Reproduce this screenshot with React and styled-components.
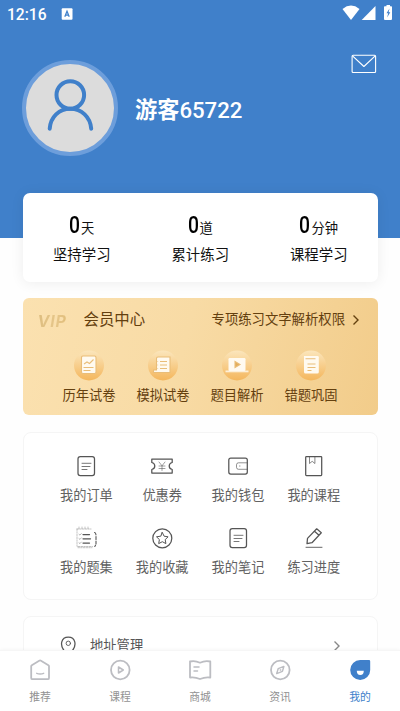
import React from "react";
import styled, { createGlobalStyle } from "styled-components";

const GlobalStyle = createGlobalStyle`
  * { box-sizing: border-box; }
  body {
    margin: 0;
    background: #fefefe;
    font-family: Roboto, "Noto Sans CJK SC", sans-serif;
  }
  svg { display: block; flex: none; }
`;

const Screen = styled.div`
  width: 400px;
  height: 711px;
  display: flex;
  flex-direction: column;
  overflow: hidden;
`;

const Content = styled.main`
  flex: 1;
  min-height: 0;
  overflow: hidden;
`;

const Hero = styled.header`
  height: 237.5px;
  background: #4080ca;
  color: #fff;
`;

const StatusBar = styled.div`
  height: 28px;
  padding: 0 7px 0 7px;
  display: flex;
  align-items: center;
`;

const Clock = styled.span`
  width: 54px;
  padding-top: 1px;
  font-size: 15.6px;
  line-height: 28px;
  font-weight: 500;
`;

const StatusIcons = styled.div`
  margin-left: auto;
  display: flex;
`;

const MailRow = styled.div`
  height: 32px;
  display: flex;
  justify-content: flex-end;
  padding: 25px 22px 0 0;
`;

const Profile = styled.div`
  display: flex;
  align-items: center;
  gap: 17px;
  padding-left: 22px;
`;

const Avatar = styled.div`
  width: 96px;
  height: 96px;
  border-radius: 50%;
  border: 4px solid #6d9edb;
  background: #dcdcdc;
`;

const UserName = styled.h1`
  margin: 4px 0 0;
  font-size: 22.2px;
  line-height: 32px;
  font-weight: 700;
`;

const Digits = styled.span`
  font-weight: 500;
`;

const Stats = styled.section`
  height: 89px;
  margin: -44.5px 22px 0 22.5px;
  padding-top: 19px;
  border-radius: 7px;
  background: #fff;
  box-shadow: 0 1px 14px rgba(0, 0, 0, 0.07);
  display: grid;
  grid-template-columns: repeat(3, 1fr);
`;

const Stat = styled.div`
  display: flex;
  flex-direction: column;
  align-items: center;
  color: #111;
`;

const StatValue = styled.div`
  height: 31px;
  display: flex;
  align-items: baseline;
  font-size: 13.3px;
  line-height: 28px;
`;

const Count = styled.span`
  width: 12px;
  font-size: 23px;
  font-weight: 500;
  color: #000;
  transform: scaleX(0.84);
  transform-origin: left;
`;

const StatLabel = styled.div`
  font-size: 14.4px;
  line-height: 26px;
`;

const VipCard = styled.section`
  height: 117px;
  margin: 16px 22px 0 22.5px;
  border-radius: 6px;
  background: linear-gradient(105deg, #fbe1b0 0%, #f8dba5 45%, #f2cc8a 100%);
  color: #64400f;
`;

const VipHeader = styled.div`
  height: 43px;
  padding: 0 17px 0 15px;
  display: flex;
  align-items: center;
`;

const VipMark = styled.span`
  width: 46px;
  padding-top: 2px;
  font-family: Inter, sans-serif;
  font-size: 16px;
  font-style: italic;
  font-weight: 700;
  letter-spacing: 0.8px;
  line-height: 20px;
  background: linear-gradient(100deg, #dcbc7e, #e6c68a 40%, #dfba74 70%);
  background-clip: text;
  color: transparent;
`;

const VipTitle = styled.span`
  font-size: 15.4px;
  line-height: 24px;
`;

const VipNote = styled.span`
  margin: 0 6px 0 auto;
  font-size: 13.35px;
  line-height: 24px;
`;

const VipGrid = styled.div`
  display: grid;
  grid-template-columns: repeat(4, 74px);
  padding: 8px 0 0 29.5px;
`;

const VipItem = styled.div`
  display: flex;
  flex-direction: column;
  align-items: center;
  gap: 3px;
  font-size: 13.3px;
  line-height: 24px;
`;

const MenuCard = styled.section`
  height: 168px;
  margin: 17px 22px 0 22.5px;
  padding: 21px 0 0 25px;
  border: 1.5px solid #f5f5f5;
  border-radius: 8px;
  background: #fff;
  display: grid;
  grid-template-columns: repeat(4, 75.8px);
  grid-auto-rows: 72px;
`;

const MenuItem = styled.div`
  display: flex;
  flex-direction: column;
  align-items: center;
  gap: 6px;
  color: #626262;
  font-size: 13.2px;
  line-height: 24px;
`;

const AddressCard = styled.section`
  height: 60px;
  margin: 16px 22px 0 22.5px;
  padding: 0 35px 0 32px;
  border: 1.5px solid #f5f5f5;
  border-radius: 8px;
  background: #fff;
  display: flex;
  align-items: center;
  color: #555;
`;

const AddressLabel = styled.span`
  margin: 0 auto 0 10.5px;
  font-size: 13.3px;
  line-height: 24px;
`;

const TabBar = styled.nav`
  height: 61.5px;
  flex: none;
  background: #fff;
  border-top: 1px solid #f6f6f6;
  display: grid;
  grid-template-columns: repeat(5, 80px);
  box-shadow: 0 -1px 3px rgba(0, 0, 0, 0.03);
  z-index: 1;
`;

const Tab = styled.div`
  padding-top: 7px;
  display: flex;
  flex-direction: column;
  align-items: center;
  gap: 6px;
  font-size: 10.8px;
  line-height: 20px;
  color: ${(p) => (p.$active ? "#4080ca" : "#929292")};
`;

const LineIcon = ({ children, width = 1.25 }) => (
  <svg width="24" height="24" viewBox="0 0 24 24" fill="none" stroke="#555" strokeWidth={width} strokeLinejoin="round" strokeLinecap="round">
    {children}
  </svg>
);

const TabIcon = ({ children }) => (
  <svg width="24" height="24" viewBox="0 0 24 24" fill="none" stroke="#bcbdc2" strokeWidth="1.8" strokeLinejoin="round" strokeLinecap="round">
    {children}
  </svg>
);

const Chevron = ({ color }) => (
  <svg width="10" height="14" viewBox="0 0 10 14" fill="none" stroke={color} strokeWidth="1.4">
    <path d="M2.5 2.5 7 7l-4.5 4.5" />
  </svg>
);

const Person = () => (
  <svg width="88" height="88" viewBox="0 0 88 88" fill="none" stroke="#4080ca" strokeWidth="4" strokeLinecap="round">
    <circle cx="44.3" cy="31" r="13.8" />
    <path d="M23.7 64.7C24.5 53 33 44.8 44.3 44.8S64.3 53 65.2 64.7" />
  </svg>
);

const Mail = () => (
  <svg width="28" height="20" viewBox="0 0 28 20" fill="none" stroke="#fff" strokeWidth="1.1" strokeLinejoin="round">
    <rect x="2.1" y="2.3" width="23.5" height="17.2" rx="1" />
    <path d="m2.5 2.8 11.4 10.7L25.2 2.8" />
  </svg>
);

const InputBadge = () => (
  <svg width="12" height="12" viewBox="0 0 12 12">
    <rect x="0.7" y="0.2" width="10.8" height="11.5" rx="1" fill="#fff" />
    <path d="M3.8 8.8 6 3.2l2.2 5.6M4.6 7h2.8" stroke="#4080ca" strokeWidth="1.25" fill="none" />
  </svg>
);

const Signals = () => (
  <svg width="54" height="20" viewBox="0 0 54 20" fill="#fff">
    <path d="M3.5 4.9Q12-1.7 20.5 4.9L12 15.9Z" />
    <path d="M36.5 2v14H22.7Z" />
    <path d="M47.5 1h3.5v1.3h1.2q.8 0 .8.8V15q0 1-1 1h-6q-1 0-1-1V3.1q0-.8.8-.8h1.7Z" />
    <path d="m50.5 4.500-3 4.700h1.700l-1.100 4.200 3.200-5.100h-1.700l.9-3.800Z" fill="#4080ca" />
  </svg>
);

const VIP_ART = {
  exam: (
    <>
      <path d="M9 7.5q0-1.5 1.5-1.5H22q1.5 0 1.5 1.5V22q0 1.5-1.5 1.5H10.5Q9 23.5 9 22Z" fill="#fffaf0" />
      <path d="m11.5 14 3-2 2.5 1.5L21 9.5M11 17.5h10M11 20.5h7" />
    </>
  ),
  mock: (
    <>
      <path d="M10 8.5q0-1.5 1.5-1.5h12v15.5H7V20h3Z" fill="#fffaf0" />
      <path d="M13.5 11.5h7M13.5 15h7M13.5 18.5h7M11 11.5h.6M11 15h.6M11 18.5h.6" />
    </>
  ),
  video: (
    <>
      <rect x="8" y="8" width="17" height="13" rx="1.2" fill="#fffaf0" stroke="none" />
      <path d="M5 20.5h23v1.8H5Z" fill="#fffaf0" stroke="none" opacity="0.8" />
      <path d="m14.500 11.500 5 3-5 3Z" fill="#e3ad5b" />
    </>
  ),
  wrong: (
    <>
      <path d="M9.5 6h13.500q1.300 0 1.300 1.300V22q0 1.500-1.500 1.500H11Q9.500 23.500 9.500 22Z" fill="#fffaf0" stroke="none" />
      <path d="M11 8.800h10M13 14h8M13 17.500h8M13 20.500h4" />
    </>
  ),
};

const VipIcon = ({ name }) => (
  <svg width="32" height="32" viewBox="0 0 32 32" fill="none" strokeWidth="1.1">
    <defs>
      <linearGradient id={`coin-${name}`} x2="0" y2="1">
        <stop stopColor="#fbe6bc" />
        <stop offset="1" stopColor="#f4b65c" />
      </linearGradient>
    </defs>
    <circle cx="16" cy="16.5" r="15" fill={`url(#coin-${name})`} />
    <g transform="translate(-0.5 1)" stroke="#e9bd78">
      {VIP_ART[name]}
    </g>
  </svg>
);

const NoteArt = (
  <>
    <rect x="4" y="2.5" width="16.5" height="19" rx="2.3" />
    <path d="M8 9.3h9M8 12.5h8M8 15.5h5" strokeWidth="0.8" />
  </>
);

const MENU = [
  { label: "我的订单", art: NoteArt },
  {
    label: "优惠券",
    art: (
      <>
        <path d="M1.8 5h20.4v3.5c-2 .5-3 1.700-3 3.500s1 3 3 3.500V19H1.800v-3.500c2-.5 3-1.700 3-3.500s-1-3-3-3.500Z" />
        <path d="m9 8 3 3.800L15 8M9 12h6M9 14.500h6M12 12v4.500" strokeWidth="0.7" opacity="0.8" />
      </>
    ),
  },
  {
    label: "我的钱包",
    art: (
      <>
        <rect x="2.8" y="4" width="18.5" height="16" rx="2" />
        <path d="M21 8.800h-8.500q-2 0-2 2v2.500q0 2 2 2H21M13.500 12h.5" strokeWidth="0.8" opacity="0.8" />
      </>
    ),
  },
  {
    label: "我的课程",
    art: (
      <>
        <rect x="3.7" y="2.5" width="16" height="19" rx="0.7" />
        <path d="M7.500 3v6.500L10.200 7.300l2.700 2.200V3" strokeWidth="0.7" />
      </>
    ),
  },
  {
    label: "我的题集",
    art: (
      <>
        <path d="M3 3v17.500h15.500M4 21.700h14M3 3h14M5 1v2M8 1v2M11 1v2M14 1v2" strokeWidth="0.6" opacity="0.6" strokeDasharray="1.5 1.2" />
        <path d="M9 8.500h6.500M9 12.800h7.500M9 17h6.500" />
        <path d="m5 8.300 1 .8 1.300-1.500M5 12.600l1 .8 1.300-1.500M5 16.800l1 .8 1.300-1.500" strokeWidth="0.6" opacity="0.7" />
        <path d="M20.500 6.500c1.500 0 1.500 2 1.500 4v8l-1.200 2" strokeWidth="1.1" strokeDasharray="3 1.5" />
      </>
    ),
  },
  {
    label: "我的收藏",
    art: (
      <>
        <circle cx="12.3" cy="12.3" r="9.5" />
        <path d="m12.300 6.500 1.800 3.700 4 .6-2.900 2.800.7 4-3.600-1.900-3.600 1.900.7-4-2.900-2.800 4-.6Z" strokeWidth="1" />
      </>
    ),
  },
  { label: "我的笔记", art: NoteArt },
  {
    label: "练习进度",
    art: (
      <>
        <path d="m5 17.600.5-5.200L14.700 2.800l4.600 4L10 16.700ZM12.500 5.200l4.500 4" />
        <path d="M4 21.300h16" strokeWidth="0.9" />
      </>
    ),
  },
];

const TABS = [
  {
    label: "推荐",
    icon: (
      <TabIcon>
        <path d="M3.200 8.300q0-.7.600-1.100l7.400-4.500q.9-.5 1.800 0l7.400 4.500q.6.400.6 1.100v11.600q0 1.300-1.300 1.300H4.500q-1.300 0-1.300-1.300Z" />
        <path d="M8.700 15.300q3.500 1.300 7 0" strokeWidth="1.4" />
      </TabIcon>
    ),
  },
  {
    label: "课程",
    icon: (
      <TabIcon>
        <circle cx="12.3" cy="12" r="9.3" />
        <path d="M10.500 9v6l4.800-3Z" strokeWidth="1.5" />
      </TabIcon>
    ),
  },
  {
    label: "商城",
    icon: (
      <TabIcon>
        <path d="M2 3.500q5-1.200 10 1.200 5-2.400 10.300-1.200v16q-5.300-.7-10.300 1.500-5-2.200-10-1.500Z" />
        <path d="M6 9h5M6 13h3.500" strokeWidth="1.5" />
      </TabIcon>
    ),
  },
  {
    label: "资讯",
    icon: (
      <TabIcon>
        <circle cx="12.3" cy="12" r="9.3" />
        <path d="m15.900 8.400-1.500 5-5.700 2.200 1.500-5Z" strokeWidth="1.5" />
        <circle cx="12.3" cy="12" r="0.5" strokeWidth="0.8" />
      </TabIcon>
    ),
  },
  {
    label: "我的",
    active: true,
    icon: (
      <svg width="24" height="24" viewBox="0 0 24 24">
        <path d="M12.200 2H21q1.200 0 1.200 1.200V12a10 10 0 1 1-10-10Z" fill="#4080ca" />
        <path d="M8.800 12.800h7q0 4.200-3.500 4.200t-3.500-4.200Z" fill="#fff" />
      </svg>
    ),
  },
];

const STATS = [
  { unit: "天", label: "坚持学习" },
  { unit: "道", label: "累计练习" },
  { unit: "分钟", label: "课程学习" },
];

const VIP_ITEMS = [
  { name: "exam", label: "历年试卷" },
  { name: "mock", label: "模拟试卷" },
  { name: "video", label: "题目解析" },
  { name: "wrong", label: "错题巩固" },
];

export default function App() {
  return (
    <Screen>
      <GlobalStyle />
      <Content>
        <Hero>
          <StatusBar>
            <Clock>12:16</Clock>
            <InputBadge />
            <StatusIcons>
              <Signals />
            </StatusIcons>
          </StatusBar>
          <MailRow>
            <Mail />
          </MailRow>
          <Profile>
            <Avatar>
              <Person />
            </Avatar>
            <UserName>
              游客<Digits>65722</Digits>
            </UserName>
          </Profile>
        </Hero>
        <Stats>
          {STATS.map((s) => (
            <Stat key={s.label}>
              <StatValue>
                <Count>0</Count>
                {s.unit}
              </StatValue>
              <StatLabel>{s.label}</StatLabel>
            </Stat>
          ))}
        </Stats>
        <VipCard>
          <VipHeader>
            <VipMark>VIP</VipMark>
            <VipTitle>会员中心</VipTitle>
            <VipNote>专项练习文字解析权限</VipNote>
            <Chevron color="#64400f" />
          </VipHeader>
          <VipGrid>
            {VIP_ITEMS.map((v) => (
              <VipItem key={v.name}>
                <VipIcon name={v.name} />
                {v.label}
              </VipItem>
            ))}
          </VipGrid>
        </VipCard>
        <MenuCard>
          {MENU.map((m) => (
            <MenuItem key={m.label}>
              <LineIcon>{m.art}</LineIcon>
              {m.label}
            </MenuItem>
          ))}
        </MenuCard>
        <AddressCard>
          <LineIcon>
            <path d="M8.500 17C3.500 11.500 5 3 12.300 3S21 11.500 16 17l-3.700 4Z" />
            <circle cx="12.3" cy="9.3" r="2.2" strokeWidth="0.9" />
          </LineIcon>
          <AddressLabel>地址管理</AddressLabel>
          <Chevron color="#888" />
        </AddressCard>
      </Content>
      <TabBar>
        {TABS.map((t) => (
          <Tab key={t.label} $active={t.active}>
            {t.icon}
            {t.label}
          </Tab>
        ))}
      </TabBar>
    </Screen>
  );
}
